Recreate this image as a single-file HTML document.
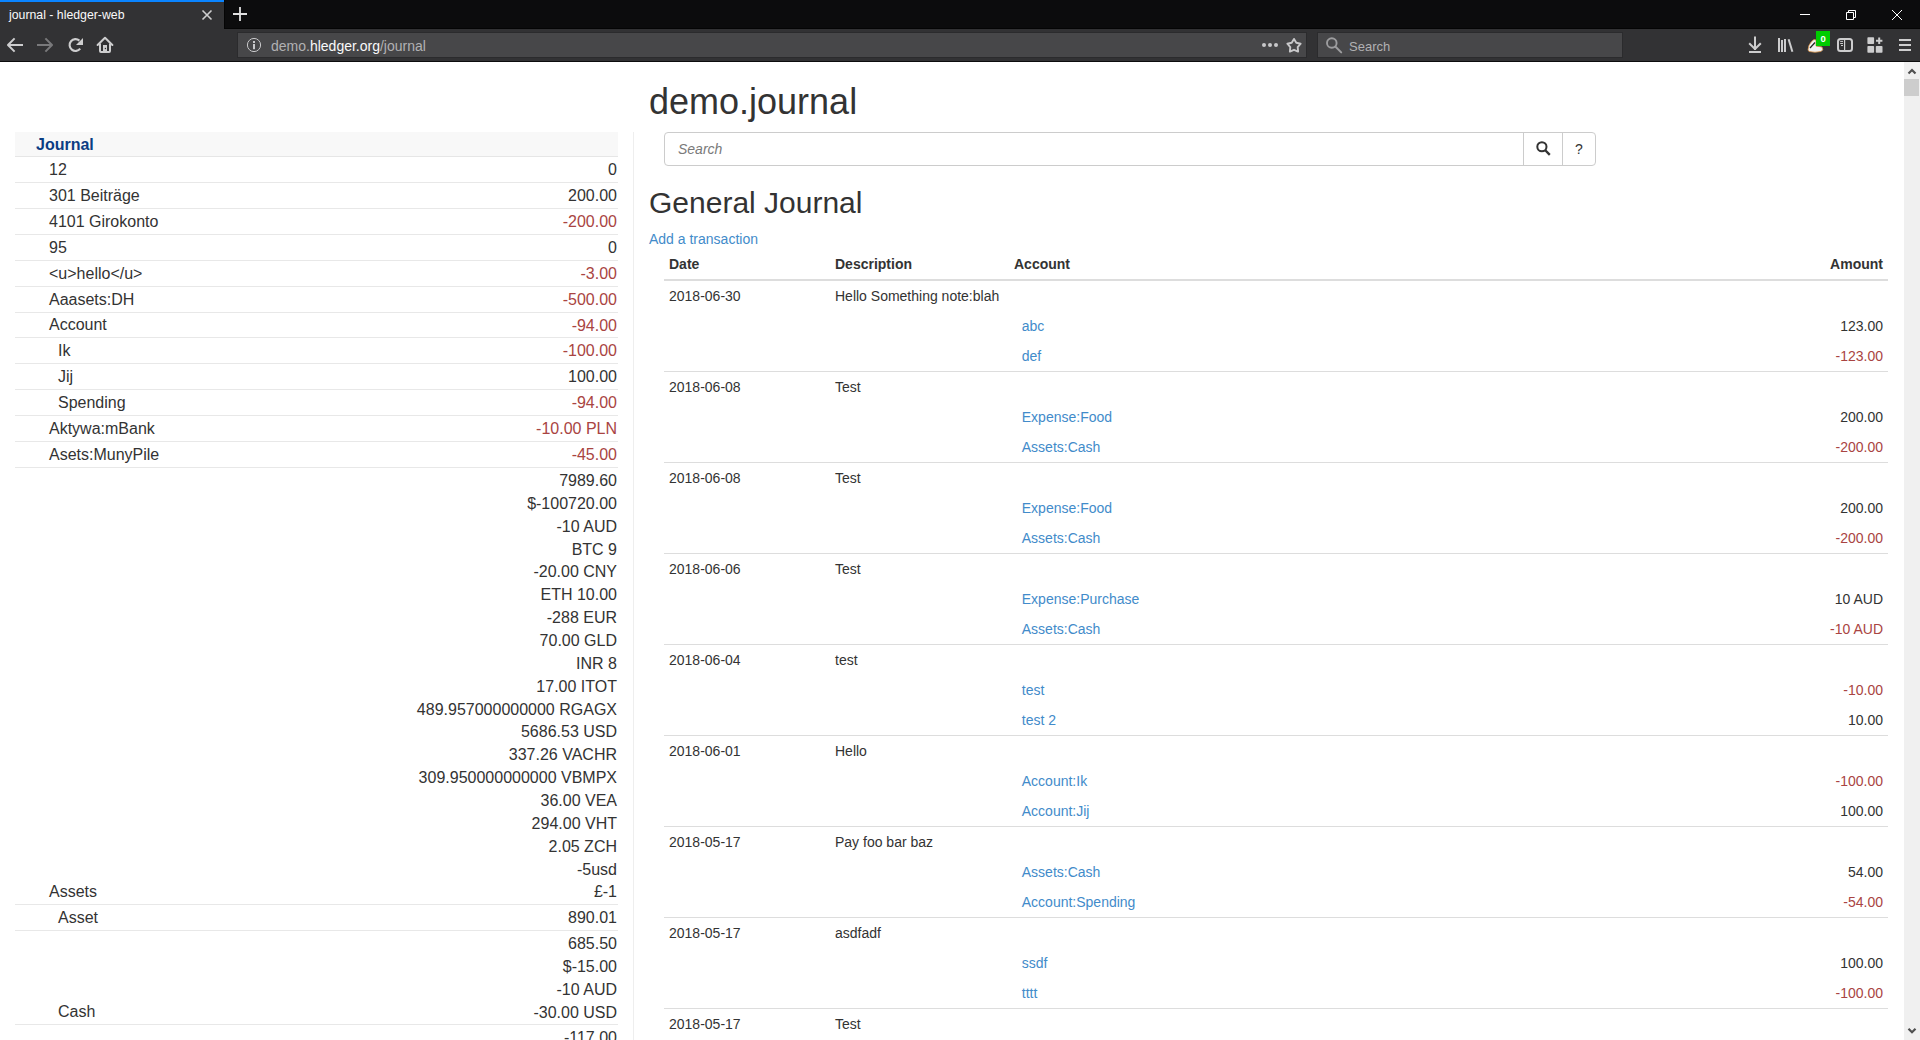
<!DOCTYPE html>
<html><head><meta charset="utf-8">
<style>
*{box-sizing:border-box}
html,body{margin:0;padding:0;width:1920px;height:1040px;overflow:hidden;background:#fff;font-family:"Liberation Sans",sans-serif;color:#333}
#chrome{position:absolute;left:0;top:0;width:1920px;height:62px;background:#323234}
#titlebar{position:absolute;left:0;top:0;width:1920px;height:29px;background:#0c0c0d}
#tab{position:absolute;left:0;top:0;width:224px;height:29px;background:#323234}
#tabline{position:absolute;left:0;top:0;width:224px;height:2px;background:#0a84ff}
#tabtitle{position:absolute;left:9px;top:8px;font-size:12.3px;line-height:14px;color:#f9f9fa;white-space:nowrap}
#toolbar{position:absolute;left:0;top:29px;width:1920px;height:32px;background:#323234}
#tbline{position:absolute;left:0;top:61px;width:1920px;height:1px;background:#0c0c0d}
#urlbar{position:absolute;left:237px;top:32px;width:1070px;height:26px;background:#474749;border:1px solid #2b2b2d}
#urltext{position:absolute;left:271px;top:38px;font-size:14px;line-height:16px;color:#b1b1b3;white-space:nowrap}
#urltext b{font-weight:normal;color:#f9f9fa}
#searchbar{position:absolute;left:1317px;top:32px;width:306px;height:26px;background:#474749;border:1px solid #2b2b2d}
#searchtext{position:absolute;left:1349px;top:39px;font-size:13px;line-height:16px;color:#b1b1b3}
svg.ic{position:absolute;overflow:visible}
#page{position:absolute;left:0;top:62px;width:1904px;height:978px;overflow:hidden;background:#fff}
#scroll{position:absolute;left:1904px;top:62px;width:16px;height:978px;background:#f0f0f0}
#thumb{position:absolute;left:0px;top:17px;width:15px;height:17px;background:#cdcdcd}
/* page content (coords relative to page top=62) */
#sidebar{position:absolute;left:15px;top:70px;width:603px;font-size:16px}
#sbhead{height:25px;background:#f8f8f8;border-bottom:1px solid #e6e6e6;position:relative}
#sbhead a{position:absolute;left:21px;top:2px;line-height:22.857px;font-weight:bold;color:#0b3d84}
.sr{position:relative;border-bottom:1px solid #e8e8e8;box-sizing:content-box}
.sn{position:absolute;left:34px;bottom:0px;line-height:22.857px;white-space:nowrap}
.sn.d1{left:43px}
.sa{position:absolute;right:1px;top:2px;line-height:22.857px;text-align:right;white-space:nowrap}
.n{color:#a94442}
#vsep{position:absolute;left:633px;top:70px;width:1px;height:908px;background:#eee}
#h1{position:absolute;left:649px;top:20px;font-size:36px;line-height:40px;margin:0;font-weight:normal;white-space:nowrap}
#search{position:absolute;left:664px;top:70px;width:932px;height:34px}
#sinput{position:absolute;left:0;top:0;width:860px;height:34px;border:1px solid #ccc;border-radius:4px 0 0 4px}
#sph{position:absolute;left:13px;top:8px;font-size:14px;line-height:16px;font-style:italic;color:#7a7a7a}
#sbtn{position:absolute;left:859px;top:0;width:40px;height:34px;border:1px solid #ccc}
#qbtn{position:absolute;left:898px;top:0;width:34px;height:34px;border:1px solid #ccc;border-radius:0 4px 4px 0;font-size:14px;text-align:center;line-height:33px}
#h2{position:absolute;left:649px;top:124px;font-size:30px;line-height:33px;margin:0;font-weight:normal;white-space:nowrap}
#addtx{position:absolute;left:649px;top:167px;font-size:14px;line-height:20px;color:#428bca}
#table{position:absolute;left:664px;top:187px;width:1224px;font-size:14px;line-height:20px}
#thead{position:relative;height:32px;border-bottom:2px solid #ddd;font-weight:bold}
.tr{position:relative;height:30px}
.tr.tx{height:31px;border-top:1px solid #ddd}
.tr.tx.first{height:30px;border-top:0}
.c1{position:absolute;left:5px;top:5px;white-space:nowrap}
.c2{position:absolute;left:171px;top:5px;white-space:nowrap}
.tr.tx .c1,.tr.tx .c2{top:5px}
.tr.tx.first .c1,.tr.tx.first .c2{top:5px}
.c3{position:absolute;left:350px;top:5px;white-space:nowrap}
.c3 a{color:#428bca;padding-left:7.78px}
.c4{position:absolute;right:5px;top:5px;white-space:nowrap;text-align:right}
#thead .c1,#thead .c2,#thead .c3,#thead .c4{top:5px}
</style></head><body>
<div id="chrome">
 <div id="titlebar"></div>
 <div id="tab"><div id="tabline"></div></div>
 <div style="position:absolute;left:224px;top:0;width:1px;height:29px;background:#050505"></div>
 <div style="position:absolute;left:224px;top:28px;width:1696px;height:1px;background:#050505"></div>

 <div id="tabtitle">journal - hledger-web</div>
 <div id="toolbar"></div>
 <div id="urlbar"></div>
 <div id="searchbar"></div>
 <div id="tbline"></div>
 <div id="urltext">demo.<b>hledger.org</b>/journal</div>
 <div id="searchtext">Search</div>
<svg id="chromesvg" width="1920" height="62" viewBox="0 0 1920 62" style="position:absolute;left:0;top:0">
 <g stroke="#cdcdce" fill="none">
  <!-- tab close -->
  <path d="M202.5,10.5 L211.5,19.5 M211.5,10.5 L202.5,19.5" stroke-width="1.6"/>
  <!-- new tab plus -->
  <path d="M240,7 V21 M233,14 H247" stroke="#e0e0e1" stroke-width="1.8"/>
  <!-- back -->
  <path d="M14.6,38.4 L8,45 L14.6,51.6" stroke-width="2" stroke-linecap="butt" stroke-linejoin="round"/><path d="M8.5,45 H23" stroke-width="2"/>
  <!-- forward (disabled) -->
  <path d="M45.4,38.4 L52,45 L45.4,51.6" stroke="#79797b" stroke-width="2" stroke-linecap="butt" stroke-linejoin="round"/><path d="M51.5,45 H37" stroke="#79797b" stroke-width="2"/>
  <!-- reload -->
  <path d="M79.4,40.6 A5.9,5.9 0 1 0 80.2,48.6" stroke-width="2.1"/>
  <path d="M76,45 H83 V38 Z" fill="#cdcdce" stroke="none"/>
  <!-- home -->
  <path d="M97.6,45 L105,37.8 L112.4,45" stroke-width="2" stroke-linecap="round" stroke-linejoin="round"/>
  <path d="M100,43.5 V51 Q100,52 101,52 H109 Q110,52 110,51 V43.5" stroke-width="2"/>
  <rect x="103" y="45" width="4" height="7" fill="#cdcdce" stroke="none"/><circle cx="105.4" cy="48.5" r="0.7" fill="#323234" stroke="none"/>
  <!-- info circle -->
  <circle cx="254" cy="45" r="6.6" stroke="#c8c8ca" stroke-width="1"/>
  <rect x="253" y="41" width="2" height="2" fill="#c8c8ca" stroke="none"/>
  <rect x="253" y="44" width="2" height="5.2" fill="#c8c8ca" stroke="none"/>
  <!-- dots -->
  <circle cx="1264" cy="45" r="2" fill="#c8c8ca" stroke="none"/>
  <circle cx="1270" cy="45" r="2" fill="#c8c8ca" stroke="none"/>
  <circle cx="1276" cy="45" r="2" fill="#c8c8ca" stroke="none"/>
  <!-- star -->
  <path d="M1294.00,38.90 L1296.29,42.74 L1300.66,43.74 L1297.71,47.11 L1298.11,51.56 L1294.00,49.80 L1289.89,51.56 L1290.29,47.11 L1287.34,43.74 L1291.71,42.74 Z" stroke="#c8c8ca" stroke-width="1.9" stroke-linejoin="round"/>
  <!-- search magnifier -->
  <circle cx="1331.8" cy="43" r="4.8" stroke="#9d9d9f" stroke-width="1.9"/>
  <path d="M1335.3,46.5 L1341.2,52.4" stroke="#9d9d9f" stroke-width="2" stroke-linecap="round"/>
  <!-- download -->
  <path d="M1755,37.5 V49 M1749.9,43.9 L1755,49 L1760.1,43.9" stroke-width="2" stroke-linecap="square" stroke-linejoin="round"/>
  <rect x="1749" y="51" width="12" height="2" fill="#cdcdce" stroke="none"/>
  <!-- library -->
  <rect x="1778" y="38" width="2" height="14" fill="#cdcdce" stroke="none"/>
  <rect x="1781" y="40" width="2" height="12" fill="#cdcdce" stroke="none"/>
  <rect x="1784" y="39" width="2" height="13" fill="#cdcdce" stroke="none"/>
  <path d="M1788.6,39.2 L1792.4,51.8" stroke-width="2"/>
  <!-- sidebar -->
  <rect x="1838" y="39" width="14" height="12" rx="2.5" stroke-width="2"/>
  <path d="M1844.6,39 V51" stroke-width="1.2"/>
  <path d="M1840.2,41.4 H1843 M1840.2,43.5 H1843 M1841,45.5 H1843" stroke-width="1"/>
  <!-- apps -->
  <rect x="1867.4" y="37.3" width="6.7" height="6.7" rx="0.8" fill="#cdcdce" stroke="none"/>
  <rect x="1867.4" y="46" width="6.7" height="6.7" rx="0.8" fill="#cdcdce" stroke="none"/>
  <rect x="1875.8" y="46" width="6.7" height="6.7" rx="0.8" fill="#cdcdce" stroke="none"/>
  <path d="M1879.2,37.6 V44 M1876,40.8 H1882.4" stroke-width="2"/>
  <!-- menu -->
  <path d="M1899,40 H1911 M1899,45 H1911 M1899,50 H1911" stroke-width="2"/>
  <!-- window controls -->
  <path d="M1800,14.5 H1810" stroke="#ffffff" stroke-width="1"/>
  <path d="M1846.5,12.5 H1853.5 V19.5 H1846.5 Z" stroke="#ffffff" stroke-width="1"/>
  <path d="M1848.5,12.5 V10.5 H1855.5 V17.5 H1853.5" stroke="#ffffff" stroke-width="1"/>
  <path d="M1892,10 L1902,20 M1902,10 L1892,20" stroke="#ffffff" stroke-width="1"/>
 </g>
 <!-- extension icon -->
 <path d="M1808,50 Q1808,45 1812,41 Q1814,38.5 1816,40 L1816,46 L1822,47 Q1824,50 1821,51.5 Q1815,53 1809,51.5 Z" fill="#f0f0f0" stroke="#d08a40" stroke-width="0.8"/>
 <path d="M1810,48 L1815,42.5" stroke="#222" stroke-width="1.2"/>
 <rect x="1816" y="31" width="14" height="15" fill="#00cc00"/>
 <text x="1823.1" y="41.8" font-family="Liberation Sans" font-weight="bold" font-size="9.5" fill="#fff" text-anchor="middle">0</text>
</svg>
</div>
<div id="page">
 <h1 id="h1">demo.journal</h1>
 <div id="sidebar">
  <div id="sbhead"><a>Journal</a></div>
<div class="sr" style="height:25px"><div class="sn d0">12</div><div class="sa ">0</div></div>
<div class="sr" style="height:25px"><div class="sn d0">301 Beiträge</div><div class="sa ">200.00</div></div>
<div class="sr" style="height:25px"><div class="sn d0">4101 Girokonto</div><div class="sa n">-200.00</div></div>
<div class="sr" style="height:25px"><div class="sn d0">95</div><div class="sa ">0</div></div>
<div class="sr" style="height:25px"><div class="sn d0">&lt;u&gt;hello&lt;/u&gt;</div><div class="sa n">-3.00</div></div>
<div class="sr" style="height:25px"><div class="sn d0">Aaasets:DH</div><div class="sa n">-500.00</div></div>
<div class="sr" style="height:24px"><div class="sn d0">Account</div><div class="sa n">-94.00</div></div>
<div class="sr" style="height:25px"><div class="sn d1">Ik</div><div class="sa n">-100.00</div></div>
<div class="sr" style="height:25px"><div class="sn d1">Jij</div><div class="sa ">100.00</div></div>
<div class="sr" style="height:25px"><div class="sn d1">Spending</div><div class="sa n">-94.00</div></div>
<div class="sr" style="height:25px"><div class="sn d0">Aktywa:mBank</div><div class="sa n">-10.00 PLN</div></div>
<div class="sr" style="height:25px"><div class="sn d0">Asets:MunyPile</div><div class="sa n">-45.00</div></div>
<div class="sr" style="height:436px"><div class="sn d0">Assets</div><div class="sa ">7989.60<br>$-100720.00<br>-10 AUD<br>BTC 9<br>-20.00 CNY<br>ETH 10.00<br>-288 EUR<br>70.00 GLD<br>INR 8<br>17.00 ITOT<br>489.957000000000 RGAGX<br>5686.53 USD<br>337.26 VACHR<br>309.950000000000 VBMPX<br>36.00 VEA<br>294.00 VHT<br>2.05 ZCH<br>-5usd<br>£-1</div></div>
<div class="sr" style="height:25px"><div class="sn d1">Asset</div><div class="sa ">890.01</div></div>
<div class="sr" style="height:93px"><div class="sn d1">Cash</div><div class="sa ">685.50<br>$-15.00<br>-10 AUD<br>-30.00 USD</div></div>
<div class="sr" style="height:25px"><div class="sn d1"></div><div class="sa ">-117.00</div></div>
 </div>
 <div id="vsep"></div>
 <div id="search">
  <div id="sinput"><div id="sph">Search</div></div>
  <div id="sbtn"></div>
  <div id="qbtn">?</div>
 </div>
 <h2 id="h2">General Journal</h2>
 <a id="addtx">Add a transaction</a>
 <div id="table">
  <div id="thead"><div class="c1">Date</div><div class="c2">Description</div><div class="c3">Account</div><div class="c4">Amount</div></div>
<div class="tr tx first"><div class="c1">2018-06-30</div><div class="c2">Hello Something note:blah</div></div><div class="tr"><div class="c3"><a>abc</a></div><div class="c4 ">123.00</div></div><div class="tr"><div class="c3"><a>def</a></div><div class="c4 n">-123.00</div></div>
<div class="tr tx"><div class="c1">2018-06-08</div><div class="c2">Test</div></div><div class="tr"><div class="c3"><a>Expense:Food</a></div><div class="c4 ">200.00</div></div><div class="tr"><div class="c3"><a>Assets:Cash</a></div><div class="c4 n">-200.00</div></div>
<div class="tr tx"><div class="c1">2018-06-08</div><div class="c2">Test</div></div><div class="tr"><div class="c3"><a>Expense:Food</a></div><div class="c4 ">200.00</div></div><div class="tr"><div class="c3"><a>Assets:Cash</a></div><div class="c4 n">-200.00</div></div>
<div class="tr tx"><div class="c1">2018-06-06</div><div class="c2">Test</div></div><div class="tr"><div class="c3"><a>Expense:Purchase</a></div><div class="c4 ">10 AUD</div></div><div class="tr"><div class="c3"><a>Assets:Cash</a></div><div class="c4 n">-10 AUD</div></div>
<div class="tr tx"><div class="c1">2018-06-04</div><div class="c2">test</div></div><div class="tr"><div class="c3"><a>test</a></div><div class="c4 n">-10.00</div></div><div class="tr"><div class="c3"><a>test 2</a></div><div class="c4 ">10.00</div></div>
<div class="tr tx"><div class="c1">2018-06-01</div><div class="c2">Hello</div></div><div class="tr"><div class="c3"><a>Account:Ik</a></div><div class="c4 n">-100.00</div></div><div class="tr"><div class="c3"><a>Account:Jij</a></div><div class="c4 ">100.00</div></div>
<div class="tr tx"><div class="c1">2018-05-17</div><div class="c2">Pay foo bar baz</div></div><div class="tr"><div class="c3"><a>Assets:Cash</a></div><div class="c4 ">54.00</div></div><div class="tr"><div class="c3"><a>Account:Spending</a></div><div class="c4 n">-54.00</div></div>
<div class="tr tx"><div class="c1">2018-05-17</div><div class="c2">asdfadf</div></div><div class="tr"><div class="c3"><a>ssdf</a></div><div class="c4 ">100.00</div></div><div class="tr"><div class="c3"><a>tttt</a></div><div class="c4 n">-100.00</div></div>
<div class="tr tx"><div class="c1">2018-05-17</div><div class="c2">Test</div></div><div class="tr"><div class="c3"><a>x</a></div><div class="c4 ">0</div></div>
 </div>
</div>
<svg width="20" height="20" style="position:absolute;left:1532px;top:137px;overflow:visible"><circle cx="9.9" cy="9.75" r="4.6" fill="none" stroke="#333" stroke-width="2"/><path d="M13,13 L17.8,17.8" stroke="#333" stroke-width="2.4"/></svg>
<div id="scroll"><div id="thumb"></div>
 <svg width="16" height="978" style="position:absolute;left:0;top:0"><path d="M4.5,11.5 L8,8 L11.5,11.5" fill="none" stroke="#505050" stroke-width="2.2"/><path d="M4.5,966.8 L8,970.3 L11.5,966.8" fill="none" stroke="#505050" stroke-width="2.2"/></svg></div>
</body></html>
